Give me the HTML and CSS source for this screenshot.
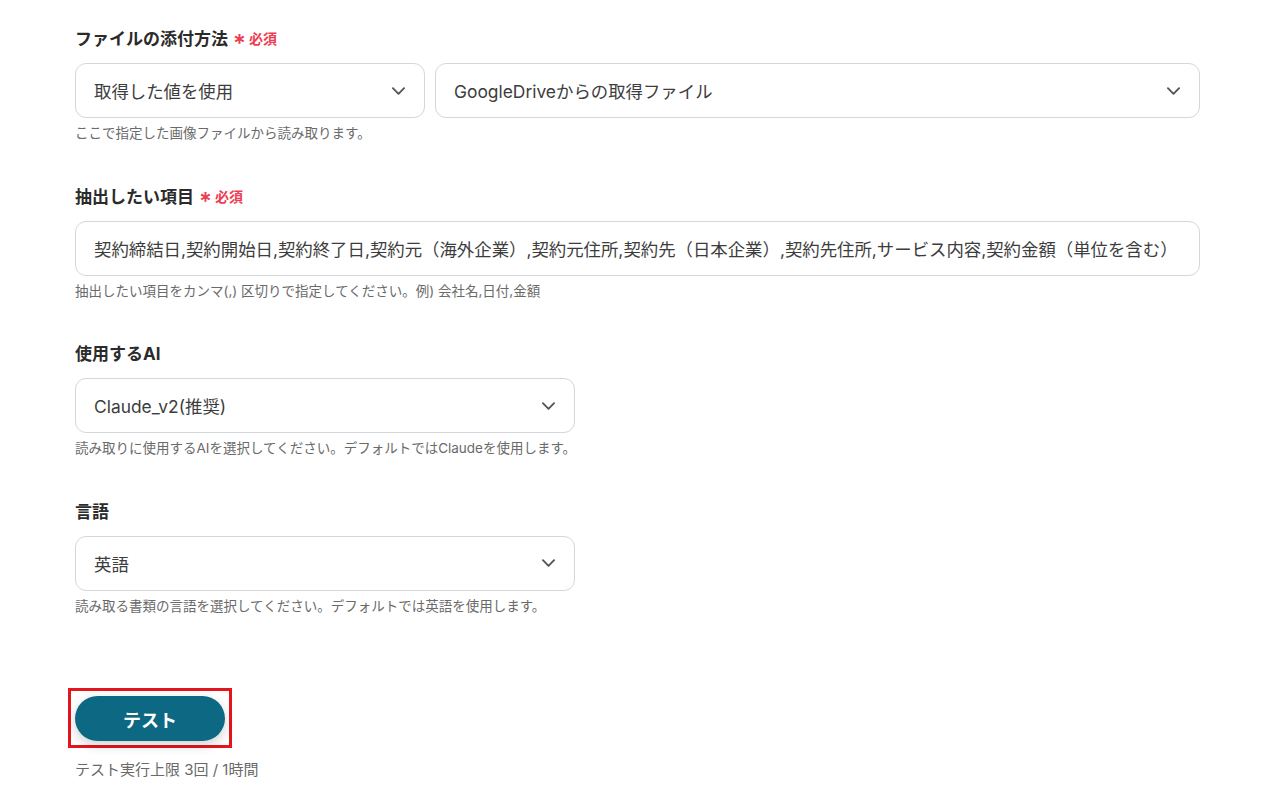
FILE: index.html
```html
<!DOCTYPE html>
<html lang="ja">
<head>
<meta charset="utf-8">
<link rel="stylesheet" href="styles.css">
</head>
<body>
<main class="form">
  <section class="field">
    <div class="label">ファイルの添付方法<span class="req"><span class="ast">*</span>必須</span></div>
    <div class="row">
      <div class="select w350"><span>取得した値を使用</span><svg class="chev" viewBox="0 0 14 8"><path d="M1 1l6 6 6-6"/></svg></div>
      <div class="select grow"><span>GoogleDriveからの取得ファイル</span><svg class="chev" viewBox="0 0 14 8"><path d="M1 1l6 6 6-6"/></svg></div>
    </div>
    <div class="help">ここで指定した画像ファイルから読み取ります。</div>
  </section>
  <section class="field">
    <div class="label">抽出したい項目<span class="req"><span class="ast">*</span>必須</span></div>
    <div class="row">
      <div class="select grow input"><span>契約締結日,契約開始日,契約終了日,契約元（海外企業）,契約元住所,契約先（日本企業）,契約先住所,サービス内容,契約金額（単位を含む）</span></div>
    </div>
    <div class="help">抽出したい項目をカンマ(,) 区切りで指定してください。例) 会社名,日付,金額</div>
  </section>
  <section class="field">
    <div class="label">使用するAI</div>
    <div class="row">
      <div class="select w500"><span>Claude_v2(推奨)</span><svg class="chev" viewBox="0 0 14 8"><path d="M1 1l6 6 6-6"/></svg></div>
    </div>
    <div class="help">読み取りに使用するAIを選択してください。デフォルトではClaudeを使用します。</div>
  </section>
  <section class="field">
    <div class="label">言語</div>
    <div class="row">
      <div class="select w500"><span>英語</span><svg class="chev" viewBox="0 0 14 8"><path d="M1 1l6 6 6-6"/></svg></div>
    </div>
    <div class="help">読み取る書類の言語を選択してください。デフォルトでは英語を使用します。</div>
  </section>
  <div class="actions">
    <div class="highlight"><button class="btn">テスト</button></div>
    <div class="limit">テスト実行上限 3回 / 1時間</div>
  </div>
</main>
</body>
</html>
```
FILE: styles.css
```css
* { box-sizing: border-box; }
html, body { margin: 0; padding: 0; background: #fff; }
body {
  font-family: Inter, "Noto Sans CJK JP", "Noto Sans", sans-serif;
  color: #2f2f2f;
}
.form {
  padding: 27px 79px 0 75px;
  width: 1279px;
}
.field { height: 157.5px; }
.label {
  font-size: 17px;
  font-weight: 700;
  line-height: 24px;
  height: 24px;
  color: #2b2b2b;
  display: flex;
  align-items: center;
}
.req {
  color: #ee3d52;
  font-size: 14px;
  font-weight: 700;
  margin-left: 5px;
  display: inline-flex;
  align-items: center;
}
.ast {
  font-size: 24px;
  font-weight: 600;
  line-height: 1;
  margin-right: 3px;
  position: relative;
  top: 5px;
}
.row {
  display: flex;
  gap: 10px;
  margin-top: 12px;
}
.select {
  height: 55px;
  border: 1px solid #d4d7dc;
  border-radius: 11px;
  display: flex;
  align-items: center;
  justify-content: space-between;
  padding: 0 19px 0 18px;
  font-size: 17.4px;
  color: #3d3d3d;
  white-space: nowrap;
  overflow: hidden;
}
.input { padding-left: 18px; }
.w350 { width: 350px; flex: none; }
.w500 { width: 500px; flex: none; }
.grow { flex: 1; }
.chev {
  width: 13px;
  height: 8px;
  flex: none;
  fill: none;
  stroke: #555;
  stroke-width: 2;
  stroke-linecap: round;
  stroke-linejoin: round;
}
.help {
  margin-top: 6px;
  font-size: 13.5px;
  line-height: 18px;
  color: #6a6a6a;
}
.actions { padding-top: 31px; }
.highlight {
  display: inline-block;
  margin-left: -7px;
  border: 3px solid #e3151d;
  padding: 5px 4px 4px 4px;
}
.btn {
  display: block;
  width: 150px;
  height: 45px;
  border: none;
  border-radius: 23px;
  background: #0d6983;
  color: #fff;
  font-family: Inter, "Noto Sans CJK JP", sans-serif;
  font-size: 18px;
  font-weight: 700;
  box-shadow: 0 4px 12px rgba(0,0,0,0.18);
}
.limit {
  margin-top: 13px;
  font-size: 15px;
  line-height: 18px;
  color: #6a6a6a;
}
```
